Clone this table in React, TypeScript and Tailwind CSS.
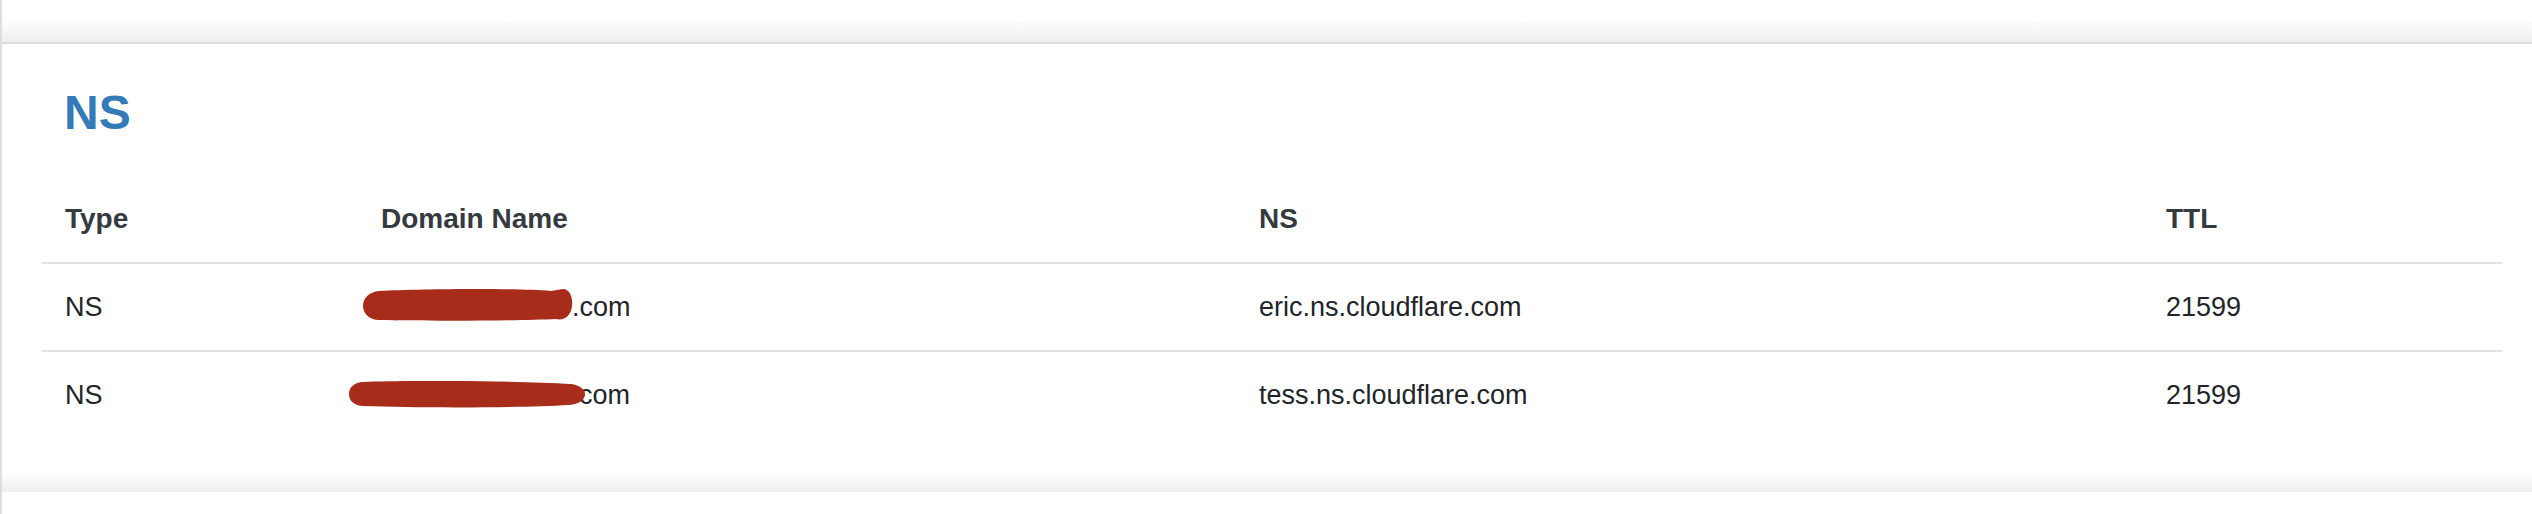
import React from "react"

type Row = { type: string; domain: string; ns: string; ttl: string; blob: 1 | 2 }

const rows: Row[] = [
  { type: "NS", domain: ".com", ns: "eric.ns.cloudflare.com", ttl: "21599", blob: 1 },
  { type: "NS", domain: "com", ns: "tess.ns.cloudflare.com", ttl: "21599", blob: 2 },
]

const cols = "grid grid-cols-[316px_878px_907px_359px]"

// red marker strokes hiding the domain name
function Redaction({ kind }: { kind: 1 | 2 }) {
  if (kind === 1) {
    return (
      <svg className="absolute left-[-18px] top-[2px]" width="210" height="32" viewBox="0 0 210 32">
        <path
          d="M16,2 C60,0 150,-1 188,2 L200,0 C207,0 210,9 209,17 C208,27 201,32 193,30 C150,32 60,32 16,31 C6,31 0,24 0,17 C0,9 6,3 16,2 Z"
          fill="#a82c1a"
        />
      </svg>
    )
  }
  return (
    <svg className="absolute left-[-32px] top-[6px]" width="236" height="27" viewBox="0 0 236 27">
      <path
        d="M13,1 C70,-1 170,0 222,3 C231,4 236,9 236,13 C236,19 230,23 220,24 C170,27 70,27 13,25 C4,24 0,19 0,13 C0,7 4,2 13,1 Z"
        fill="#a82c1a"
      />
    </svg>
  )
}

export default function App() {
  return (
    <div className="h-[514px] w-full border-l-2 border-[#dedede] bg-white font-['Liberation_Sans',Arial,sans-serif]">
      <div className="h-[42px] bg-linear-to-b from-white from-45% to-[#eeeeee]" />
      <div className="border-t-2 border-[#dcdcdc] pt-[40px]">
        <h2 className="pl-[62px] text-[48px] font-bold leading-[58px] text-[#337ab7]">NS</h2>

        <div className="ml-[40px] mt-[34px] w-[2460px] text-[27px] leading-[40px] text-[#212529]">
          <div className={`${cols} border-b-2 border-[#dee2e6] text-[28px] font-bold text-[#343a40]`}>
            <div className="px-[23px] py-[23px]">Type</div>
            <div className="px-[23px] py-[23px]">Domain Name</div>
            <div className="px-[23px] py-[23px]">NS</div>
            <div className="px-[23px] py-[23px]">TTL</div>
          </div>
          {rows.map((row, i) => (
            <div
              key={i}
              className={`${cols} ${i < rows.length - 1 ? "border-b-2 border-[#dee2e6]" : ""}`}
            >
              <div className="px-[23px] py-[23px]">{row.type}</div>
              <div className="px-[23px] py-[23px]">
                <span className="relative inline-block">
                  <span className="inline-block w-[191px]" />
                  {row.domain === "com" ? <span className="inline-block w-[7px]" /> : null}
                  {row.domain}
                  <Redaction kind={row.blob} />
                </span>
              </div>
              <div className="px-[23px] py-[23px]">{row.ns}</div>
              <div className="px-[23px] py-[23px]">{row.ttl}</div>
            </div>
          ))}
        </div>

        <div className="mt-[34px] h-[20px] bg-linear-to-b from-white to-[#efefef]" />
      </div>
    </div>
  )
}
